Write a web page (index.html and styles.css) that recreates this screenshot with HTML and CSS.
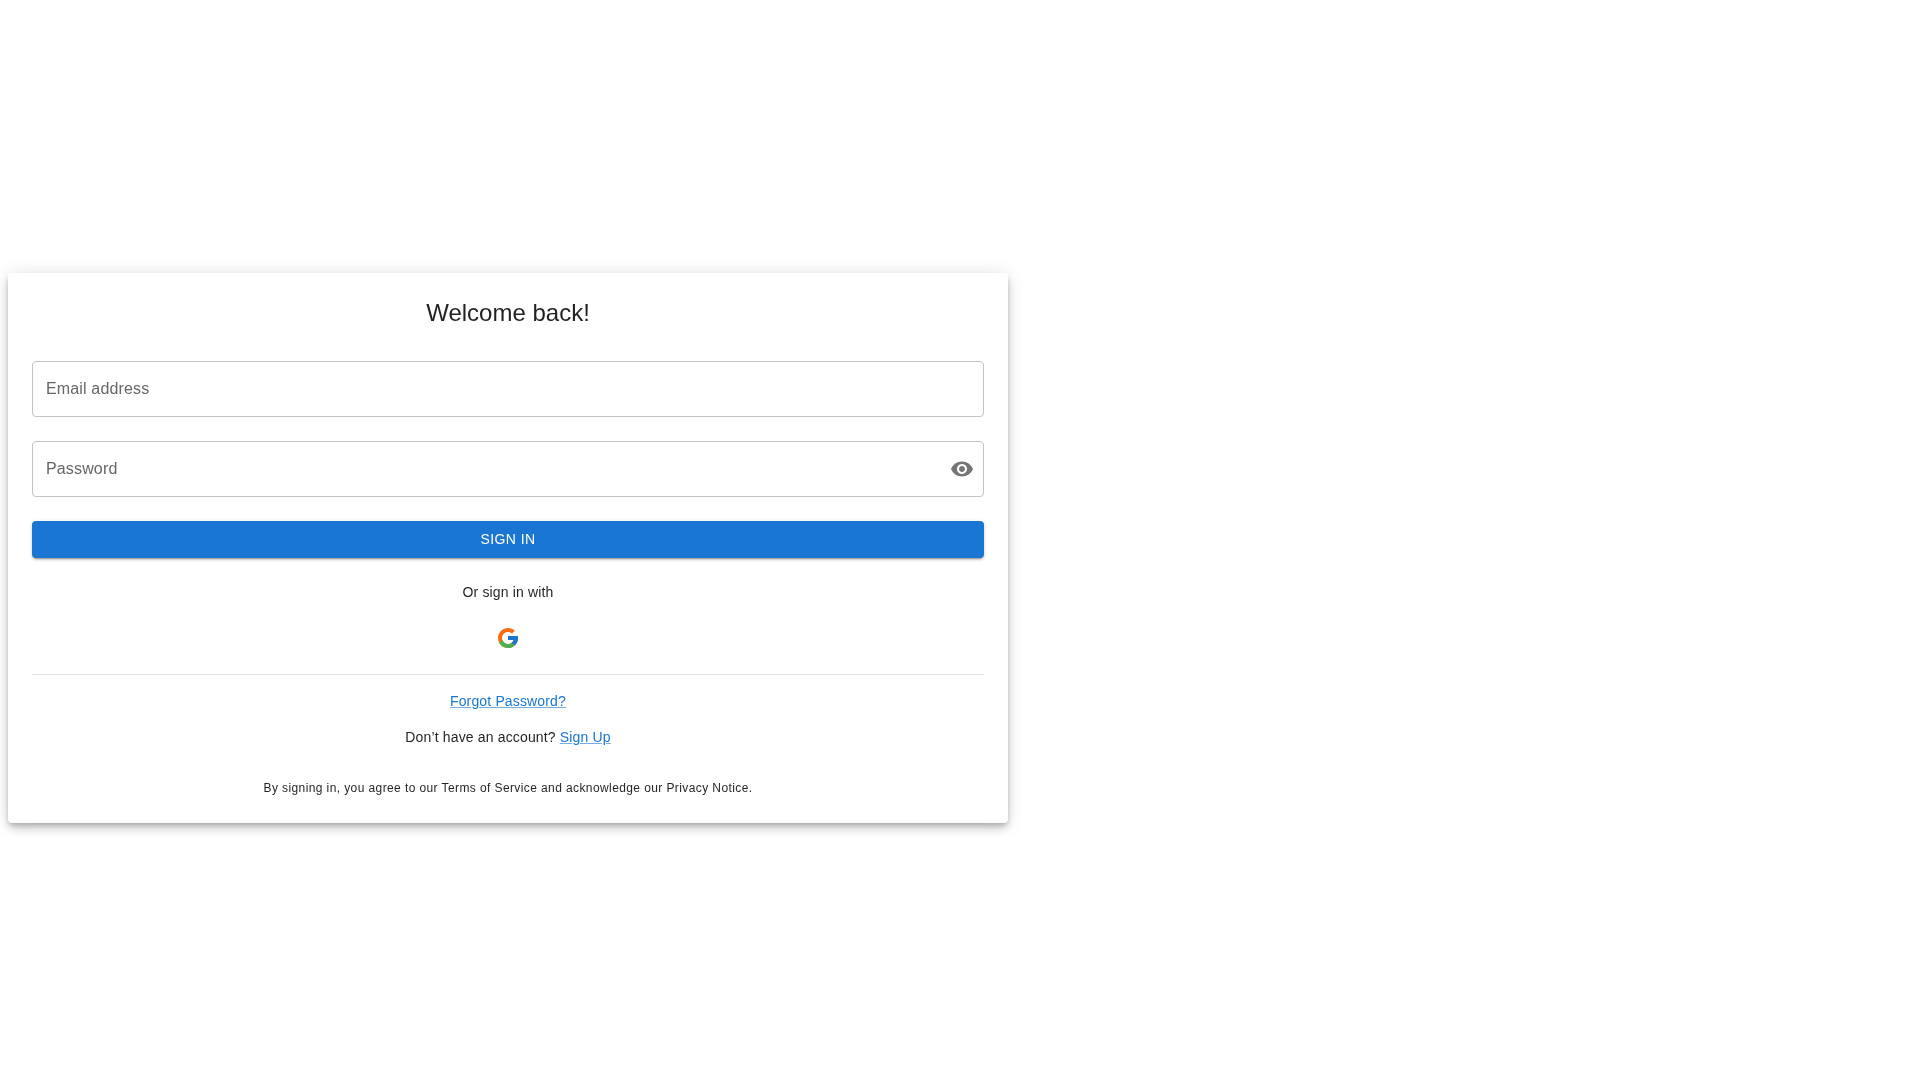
FILE: index.html
```html
<!DOCTYPE html>
<html lang="en">
<head>
<meta charset="utf-8">
<title>Sign in</title>
<link rel="stylesheet" href="styles.css">
</head>
<body>
<main class="card">
  <h1 class="title">Welcome back!</h1>
  <form class="form">
    <div class="field"><span class="label">Email address</span></div>
    <div class="field"><span class="label">Password</span>
      <svg class="eye" viewBox="0 0 24 24" width="24" height="24" aria-hidden="true"><path d="M12 4.5C7 4.5 2.73 7.61 1 12c1.73 4.39 6 7.5 11 7.5s9.27-3.11 11-7.5c-1.73-4.39-6-7.5-11-7.5zM12 17c-2.76 0-5-2.24-5-5s2.24-5 5-5 5 2.24 5 5-2.24 5-5 5zm0-8c-1.66 0-3 1.34-3 3s1.34 3 3 3 3-1.34 3-3-1.34-3-3-3z"/></svg>
    </div>
    <button class="submit" type="button">Sign in</button>
  </form>
  <p class="alt">Or sign in with</p>
  <div class="social">
    <svg viewBox="0 0 48 48" width="24" height="24" aria-hidden="true">
      <path fill="#FB6D0F" d="M43.611,20.083H42V20H24v8h11.303c-1.649,4.657-6.08,8-11.303,8c-6.627,0-12-5.373-12-12c0-6.627,5.373-12,12-12c3.059,0,5.842,1.154,7.961,3.039l5.657-5.657C34.046,6.053,29.268,4,24,4C12.955,4,4,12.955,4,24c0,11.045,8.955,20,20,20c11.045,0,20-8.955,20-20C44,22.659,43.862,21.35,43.611,20.083z"/>
      <path fill="#4CAF50" d="M24,44c5.166,0,9.86-1.977,13.409-5.192l-6.19-5.238C29.211,35.091,26.715,36,24,36c-5.202,0-9.619-3.317-11.283-7.946l-6.522,5.025C9.505,39.556,16.227,44,24,44z"/>
      <path fill="#1976D2" d="M43.611,20.083H42V20H24v8h11.303c-0.792,2.237-2.231,4.166-4.087,5.571c0.001-0.001,0.002-0.001,0.003-0.002l6.19,5.238C36.971,39.205,44,34,44,24C44,22.659,43.862,21.35,43.611,20.083z"/>
    </svg>
  </div>
  <hr class="divider">
  <p class="line first"><a href="#">Forgot Password?</a></p>
  <p class="line">Don’t have an account? <a href="#">Sign Up</a></p>
  <p class="legal">By signing in, you agree to our Terms of Service and acknowledge our Privacy Notice.</p>
</main>
</body>
</html>
```

FILE: styles.css
```css
* { box-sizing: border-box; }
html, body { height: 100%; }
body {
  margin: 0;
  padding: 273px 0 0 8px;
  background: #fff;
  font-family: "Liberation Sans", Arial, sans-serif;
  color: rgba(0, 0, 0, 0.87);
}
.card {
  width: 1000px;
  height: 550px;
  padding: 24px;
  background: #fff;
  border-radius: 4px;
  box-shadow: 0 3px 5px -1px rgba(0,0,0,.2), 0 6px 10px 0 rgba(0,0,0,.14), 0 1px 18px 0 rgba(0,0,0,.12);
  text-align: center;
  will-change: transform;
}
.title {
  margin: 0 0 32px;
  height: 32px;
  font-size: 24px;
  font-weight: 400;
  line-height: 32px;
}
.form { display: flex; flex-direction: column; gap: 24px; }
.field {
  height: 56px;
  padding: 0 13px;
  display: flex;
  align-items: center;
  justify-content: space-between;
  border: 1px solid #c4c4c4;
  border-radius: 4px;
  font-size: 16px;
  letter-spacing: 0.15px;
  color: #666;
}
.eye { fill: #757575; margin-right: -4px; flex: none; }
.submit {
  height: 37px;
  padding: 0 0 2px;
  border: 0;
  border-radius: 4px;
  background: #1976d2;
  color: #fff;
  font: 500 14px/24px "Liberation Sans", Arial, sans-serif;
  letter-spacing: 0.4px;
  text-transform: uppercase;
  box-shadow: 0 3px 1px -2px rgba(0,0,0,.2), 0 2px 2px 0 rgba(0,0,0,.14), 0 1px 5px 0 rgba(0,0,0,.12);
}
.alt, .line {
  margin: 0;
  font-size: 14px;
  line-height: 20px;
  letter-spacing: 0.15px;
}
.alt { margin-top: 24px; }
.social { display: flex; justify-content: center; margin-top: 24px; height: 24px; }
.divider { margin: 24px 0 0; border: 0; border-top: 1px solid #e0e0e0; }
.line { margin-top: 16px; }
.line.first { margin-top: 16px; }
.line a { color: #1976d2; text-decoration: underline; text-decoration-color: rgba(25,118,210,.6); }
.legal {
  margin: 31px 0 0;
  font-size: 12px;
  line-height: 20px;
  letter-spacing: 0.4px;
}
```
